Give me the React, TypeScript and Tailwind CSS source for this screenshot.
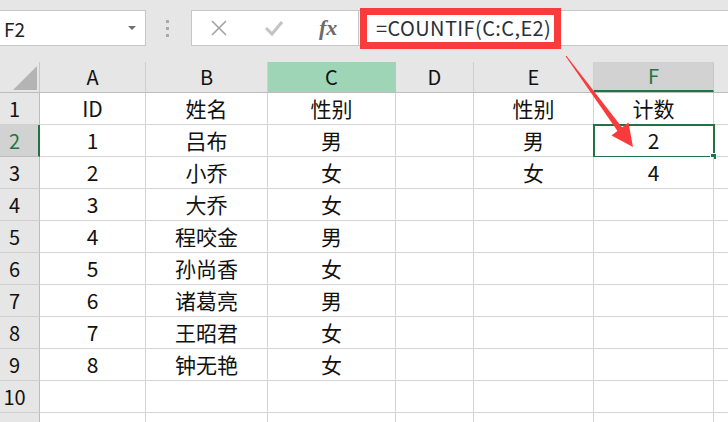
import React from "react";

const FONT = { fontFamily: '"Noto Sans CJK SC", "Noto Sans", sans-serif' };

const columns = [
  { key: "A", width: "w-[106px]" },
  { key: "B", width: "w-[122px]" },
  { key: "C", width: "w-[128px]" },
  { key: "D", width: "w-[78px]" },
  { key: "E", width: "w-[120px]" },
  { key: "F", width: "w-[120px]" },
];

const rows: string[][] = [
  ["ID", "姓名", "性别", "", "性别", "计数"],
  ["1", "吕布", "男", "", "男", "2"],
  ["2", "小乔", "女", "", "女", "4"],
  ["3", "大乔", "女", "", "", ""],
  ["4", "程咬金", "男", "", "", ""],
  ["5", "孙尚香", "女", "", "", ""],
  ["6", "诸葛亮", "男", "", "", ""],
  ["7", "王昭君", "女", "", "", ""],
  ["8", "钟无艳", "女", "", "", ""],
  ["", "", "", "", "", ""],
  ["", "", "", "", "", ""],
];

function Toolbar() {
  return (
    <div className="flex h-[62px] items-start bg-[#e6e6e6] pt-[10px]">
      {/* name box */}
      <div className="-ml-px flex h-[36px] w-[147px] items-center justify-between border border-[#c6c6c6] bg-white pl-[4px] pr-[9px]">
        <span className="text-[19px] leading-none text-[#222]">F2</span>
        <span className="h-0 w-0 border-x-[4px] border-t-[4px] border-x-transparent border-t-[#707070]" />
      </div>
      {/* separator dots */}
      <div className="ml-[20px] mt-[10px] flex w-[4px] flex-col gap-[4px]">
        <span className="h-[3px] w-[3px] bg-[#a9a9a9]" />
        <span className="h-[3px] w-[3px] bg-[#a9a9a9]" />
        <span className="h-[3px] w-[3px] bg-[#a9a9a9]" />
      </div>
      {/* cancel / enter / fx */}
      <div className="ml-[21px] flex h-[36px] w-[168px] items-center border border-[#c6c6c6] bg-white">
        <svg width="20" height="20" viewBox="0 0 20 20" className="ml-[17px]">
          <path d="M3 3 L17 17 M17 3 L3 17" stroke="#a3a3a3" strokeWidth="1.6" fill="none" />
        </svg>
        <svg width="22" height="20" viewBox="0 0 22 20" className="ml-[34px]">
          <path d="M3 10 L9 16 L19 4" stroke="#c3c3c3" strokeWidth="3" fill="none" />
        </svg>
        <span
          className="ml-[34px] text-[22px] font-bold italic leading-none text-[#6a6a6a]"
          style={{ fontFamily: '"Liberation Serif", serif' }}
        >
          fx
        </span>
      </div>
      {/* formula input */}
      <div className="relative flex h-[36px] flex-1 items-center border-y border-[#c6c6c6] bg-white">
        <div className="absolute left-[1px] top-[-3px] h-[41px] w-[201px] border-[7px] border-[#f93b3b]" />
        <span className="ml-[17px] text-[20px] leading-none tracking-[0.4px] text-[#2a2f3a]">
          =COUNTIF(C:C,E2)
        </span>
      </div>
    </div>
  );
}

function HeaderRow() {
  return (
    <div className="flex h-[31px] border-b border-[#bdbdbd] bg-[#e6e6e6]">
      <div className="relative w-[40px] shrink-0 border-r border-[#c8c8c8]">
        <svg width="24" height="24" viewBox="0 0 24 24" className="absolute left-[13px] top-[4px]">
          <polygon points="0,24 24,24 24,0" fill="#b4b4b4" />
        </svg>
      </div>
      {columns.map((c) => {
        const isC = c.key === "C";
        const isF = c.key === "F";
        return (
          <div
            key={c.key}
            className={
              c.width +
              " flex shrink-0 items-center justify-center text-[20px] " +
              (isC
                ? "border-r border-[#9fd5b7] bg-[#9fd5b7] text-[#111]"
                : isF
                ? "border-r border-[#c8c8c8] border-b-2 border-b-[#217346] bg-[#d2d2d2] text-[#217346]"
                : "border-r border-[#cfcfcf] text-[#111]")
            }
          >
            {c.key}
          </div>
        );
      })}
      <div className="flex-1" />
    </div>
  );
}

function GridRow({ index, cells }: { index: number; cells: string[] }) {
  const selectedRow = index === 2;
  return (
    <div className="flex h-[32px] shrink-0">
      <div
        className={
          "flex w-[40px] shrink-0 items-center border-b pl-[1px] text-[20px] " +
          (selectedRow
            ? "border-b-[#bdbdbd] border-r-2 border-r-[#217346] bg-[#d2d2d2] text-[#217346]"
            : "border-b-[#d0d0d0] border-r border-r-[#bdbdbd] bg-[#e6e6e6] text-[#111]")
        }
      >
        {/* row 11 is only a sliver at the bottom edge, its number is not visible */}
        <span className="w-[27px] text-center">{index <= 10 ? index : ""}</span>
      </div>
      {columns.map((c, i) => {
        const selected = selectedRow && c.key === "F";
        return (
          <div
            key={c.key}
            className={
              c.width +
              " relative flex shrink-0 items-center justify-center border-b border-r border-[#d4d4d4] bg-white text-[21px] text-[#111]"
            }
          >
            {cells[i]}
            {selected && (
              <>
                <div className="absolute -left-[1px] -top-[1px] h-[34px] w-[122px] border-2 border-[#217346]" />
                <div className="absolute -bottom-[4px] -right-[4px] h-[7px] w-[7px] border border-white bg-[#217346]" />
              </>
            )}
          </div>
        );
      })}
      <div className="flex-1 border-b border-[#d4d4d4] bg-white" />
    </div>
  );
}

function Arrow() {
  // annotation arrow from the red box down to F2
  return (
    <svg
      width="728"
      height="422"
      viewBox="0 0 728 422"
      className="pointer-events-none absolute left-0 top-0"
    >
      <polygon points="565.6,56.3 566.4,55.7 622.3,127.8 617.7,131.2" fill="#f93b3b" />
      <polygon points="628.5,122.5 611.5,135.5 633,147" fill="#f93b3b" />
    </svg>
  );
}

export default function App() {
  return (
    <div className="relative h-[422px] w-[728px] overflow-hidden bg-white" style={FONT}>
      <Toolbar />
      <HeaderRow />
      {rows.map((r, i) => (
        <GridRow key={i} index={i + 1} cells={r} />
      ))}
      <Arrow />
    </div>
  );
}
